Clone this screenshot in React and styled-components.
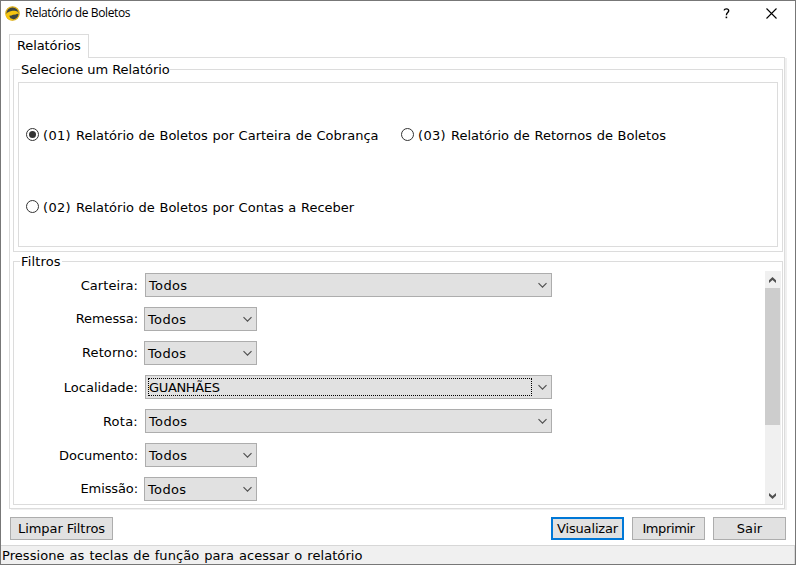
import React, { useState } from "react";
import styled, { createGlobalStyle, css } from "styled-components";

const GlobalStyle = createGlobalStyle`
  * { box-sizing: border-box; }
  body { margin: 0; overflow: hidden; }
  button { font: inherit; color: inherit; padding: 0; word-spacing: inherit; }
`;

const Window = styled.div`
  display: flex;
  flex-direction: column;
  width: 796px;
  height: 565px;
  border: 1px solid #777;
  background: #fff;
  color: #000;
  font: 13px/16px Verdana, "DejaVu Sans", sans-serif;
  white-space: nowrap;
`;

const Label = styled.span`
  letter-spacing: ${(p) => p.$track || 0}px;
  word-spacing: ${(p) => p.$space || 0}px;
`;

const TitleBar = styled.header`
  display: flex;
  align-items: center;
  height: 33px;
  padding: 0 17px 9px 4px;
  font: 12px/16px "Segoe UI", "Open Sans", sans-serif;
`;

const Title = styled.span`
  flex: 1;
  margin-left: 5px;
  letter-spacing: -0.38px;
`;

const TitleButton = styled.button`
  display: flex;
  align-items: center;
  justify-content: center;
  width: 14px;
  height: 16px;
  margin-left: 31px;
  border: 0;
  background: none;
`;

const Tab = styled.div`
  width: 80px;
  height: 24px;
  margin: 0 0 -1px 8px;
  padding: 3px 0 0 7px;
  border: 1px solid #dcdcdc;
  border-bottom: 0;
  background: #fff;
  z-index: 1;
`;

const Page = styled.main`
  width: 776px;
  height: 452px;
  margin-left: 8px;
  padding: 11px 2px 0 3px;
  border: 1px solid #dcdcdc;
  box-shadow: 2px 1px 0 #f0f0f0;
`;

const Group = styled.section`
  width: 770px;
  height: ${(p) => p.$height}px;
  margin-bottom: 9px;
  padding-left: 4px;
  border: 1px solid #dcdcdc;
`;

const Legend = styled.h2`
  width: ${(p) => p.$width}px;
  height: 16px;
  margin: -8px 0 0 2px;
  padding-left: 1px;
  background: #fff;
  font: inherit;
`;

const Reports = styled.div`
  display: grid;
  grid-template-columns: 375px 1fr;
  grid-template-rows: 72px 72px;
  width: 760px;
  height: 165px;
  margin-top: 4px;
  padding: 16px 0 0 7px;
  border: 1px solid #dcdcdc;
`;

const Option = styled.button`
  display: flex;
  align-items: center;
  border: 0;
  background: none;
  text-align: left;
`;

const RadioRing = styled.span`
  display: flex;
  align-items: center;
  justify-content: center;
  width: 13px;
  height: 13px;
  margin: -1px 4px 0 0;
  border: 1px solid #333;
  border-radius: 50%;
`;

const RadioDot = styled.span`
  width: 7px;
  height: 7px;
  border-radius: 50%;
  background: #333;
`;

const OptionNumber = styled.span`
  width: 33px;
  padding-top: 2px;
  letter-spacing: 0.3px;
`;

const OptionName = styled.span`
  padding-top: 2px;
  word-spacing: 0.5px;
`;

const FilterArea = styled.div`
  display: flex;
  justify-content: space-between;
  margin-top: 1px;
  padding-right: 1px;
`;

const FilterList = styled.div`
  display: flex;
  flex-direction: column;
  gap: 10px;
  padding-top: 2px;
`;

const FilterRow = styled.div`
  display: flex;
  height: 24px;
`;

const FilterName = styled.label`
  width: 120px;
  padding-top: ${(p) => p.$top}px;
  margin-right: ${(p) => p.$gap}px;
  text-align: right;
`;

const Combo = styled.button`
  display: flex;
  align-items: center;
  justify-content: space-between;
  width: ${(p) => p.$width}px;
  height: 24px;
  padding: 0 4px 0 2px;
  border: 1px solid #adadad;
  background: #e1e1e1;
`;

const ComboText = styled.span`
  display: flex;
  align-items: center;
  height: 18px;
  padding: 1px 0 0 1px;
  ${(p) => p.$focused && css`
    width: 384px;
    outline: 1px dotted #000;
    outline-offset: -1px;
  `}
`;

const ScrollTrack = styled.div`
  display: flex;
  flex-direction: column;
  width: 16px;
  height: 233px;
  background: #f0f0f0;
`;

const ScrollButton = styled.button`
  display: flex;
  align-items: center;
  justify-content: center;
  width: 15px;
  height: 17px;
  border: 0;
  background: none;
`;

const ScrollThumb = styled.div`
  width: 15px;
  height: 137px;
  margin-bottom: auto;
  background: #cdcdcd;
`;

const Actions = styled.div`
  display: flex;
  gap: 8px;
  height: 23px;
  margin: 8px 9px 5px;
`;

const ActionButton = styled.button`
  width: ${(p) => p.$width || 73}px;
  margin-right: ${(p) => (p.$spread ? "auto" : 0)};
  border: ${(p) => (p.$primary ? "2px solid #0078d7" : "1px solid #adadad")};
  background: #e1e1e1;
`;

const StatusBar = styled.footer`
  flex: 1;
  padding: 2px 0 0 1px;
  border-top: 1px solid #d7d7d7;
  border-right: 1px solid #d7d7d7;
  background: #f0f0f0;
`;

const AppIcon = () => (
  <svg width="15" height="15" viewBox="0 0 15 15">
    <circle cx="7.5" cy="7.5" r="6.7" fill="#3d4540" stroke="#e0b21a" strokeWidth="1.2" />
    <path d="M.8 8.4C2 6.4 4 5.6 6.5 5 8.5 4.4 11 4.7 12.4 5.6L14.2 7.9 12 7.7 10.8 8.6 8 8.7 6.4 9.5 4.2 9.8 5.5 12.2 8.6 13.2 7 14.2C3.4 14.2 1 11.6.8 8.4Z" fill="#f6c50f" />
  </svg>
);

const ComboArrow = () => (
  <svg width="9" height="6" viewBox="0 0 9 6">
    <path d="M.5 1.1 4.5 5.1 8.5 1.1" fill="none" stroke="#505050" strokeWidth="1.15" />
  </svg>
);

const ScrollArrow = ({ up }) => (
  <svg width="7" height="6" viewBox="0 0 7 6">
    <path d={up ? "M0 3.2 3.5 0 7 3.2V6L3.5 3 0 6Z" : "M0 0 3.5 3 7 0V2.8L3.5 6 0 2.8Z"} fill="#505050" />
  </svg>
);

const REPORTS = [
  { id: "01", name: "Relatório de Boletos por Carteira de Cobrança" },
  { id: "03", name: "Relatório de Retornos de Boletos" },
  { id: "02", name: "Relatório de Boletos por Contas a Receber" },
];

const FILTERS = [
  { name: "Carteira:", value: "Todos", width: 407, top: 5, nameTrack: 0.06 },
  { name: "Remessa:", value: "Todos", width: 113, top: 4, nameTrack: -0.08 },
  { name: "Retorno:", value: "Todos", width: 113, top: 4, nameTrack: 0.1 },
  { name: "Localidade:", value: "GUANHÃES", width: 407, top: 5, focused: true, track: -0.35 },
  { name: "Rota:", value: "Todos", width: 407, top: 5, nameTrack: 0.25 },
  { name: "Documento:", value: "Todos", width: 112, top: 5, nameTrack: -0.08 },
  { name: "Emissão:", value: "Todos", width: 113, top: 4, nameTrack: -0.1 },
];

export default function App() {
  const [report, setReport] = useState("01");
  return (
    <>
      <GlobalStyle />
      <Window>
        <TitleBar>
          <AppIcon />
          <Title>Relatório de Boletos</Title>
          <TitleButton>
            <svg width="7" height="11" viewBox="0 0 7 11">
              <path d="M1 2.4C1.4 1.2 2.2.8 3.4.8 5 .8 5.7 1.6 5.7 2.8 5.7 4.6 3.4 4.7 3.4 7.2" fill="none" stroke="#000" strokeWidth="1.35" />
              <path d="M2.6 8.6h1.6v1.6H2.6z" />
            </svg>
          </TitleButton>
          <TitleButton>
            <svg width="11" height="11" viewBox="0 0 11 11">
              <path d="M.5.5l10 10M10.5.5l-10 10" stroke="#000" strokeWidth="1.1" />
            </svg>
          </TitleButton>
        </TitleBar>
        <Tab><Label $track={-0.1}>Relatórios</Label></Tab>
        <Page>
          <Group $height={183}>
            <Legend $width={150}><Label $track={-0.06}>Selecione um Relatório</Label></Legend>
            <Reports>
              {REPORTS.map((r) => (
                <Option key={r.id} onClick={() => setReport(r.id)}>
                  <RadioRing>{report === r.id && <RadioDot />}</RadioRing>
                  <OptionNumber>({r.id})</OptionNumber>
                  <OptionName>{r.name}</OptionName>
                </Option>
              ))}
            </Reports>
          </Group>
          <Group $height={244}>
            <Legend $width={42}><Label $track={0.15}>Filtros</Label></Legend>
            <FilterArea>
              <FilterList>
                {FILTERS.map((f) => (
                  <FilterRow key={f.name}>
                    <FilterName $top={f.top} $gap={f.width === 113 ? 6 : 7}>
                      <Label $track={f.nameTrack}>{f.name}</Label>
                    </FilterName>
                    <Combo $width={f.width}>
                      <ComboText $focused={f.focused}>
                        <Label $track={f.track ?? 0.35}>{f.value}</Label>
                      </ComboText>
                      <ComboArrow />
                    </Combo>
                  </FilterRow>
                ))}
              </FilterList>
              <ScrollTrack>
                <ScrollButton><ScrollArrow up /></ScrollButton>
                <ScrollThumb />
                <ScrollButton><ScrollArrow /></ScrollButton>
              </ScrollTrack>
            </FilterArea>
          </Group>
        </Page>
        <Actions>
          <ActionButton $width={103} $spread><Label $track={-0.06}>Limpar Filtros</Label></ActionButton>
          <ActionButton $primary><Label $track={-0.15}>Visualizar</Label></ActionButton>
          <ActionButton><Label $track={-0.4}>Imprimir</Label></ActionButton>
          <ActionButton><Label $track={0.05}>Sair</Label></ActionButton>
        </Actions>
        <StatusBar><Label $track={0.06} $space={0.8}>Pressione as teclas de função para acessar o relatório</Label></StatusBar>
      </Window>
    </>
  );
}
